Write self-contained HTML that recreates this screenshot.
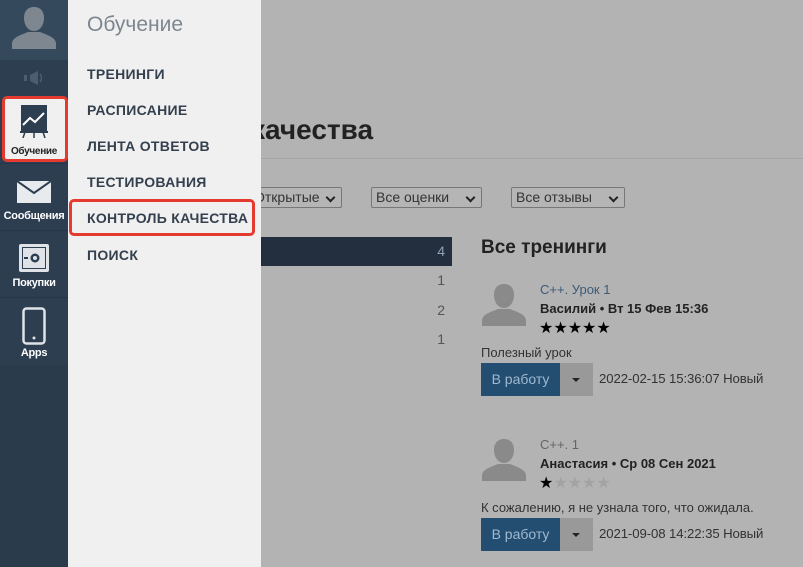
<!DOCTYPE html>
<html><head><meta charset="utf-8"><style>
*{margin:0;padding:0;box-sizing:border-box}
body{width:803px;height:567px;overflow:hidden;position:relative;background:#b3b3b3;font-family:"Liberation Sans",sans-serif;color:#222}
.abs{position:absolute}
#side{left:0;top:0;width:68px;height:567px;background:#2d3e50}
.lbl{position:absolute;width:68px;text-align:center;font-size:11px;font-weight:bold;color:#fff;letter-spacing:-0.3px}
#menu{left:68px;top:0;width:193px;height:567px;background:#f0f0f0;z-index:2}
.mi{position:absolute;left:19px;font-size:14px;font-weight:bold;color:#34404e;letter-spacing:0.3px}
.sel{position:absolute;top:187px;height:21px;border:1px solid #777;border-radius:2px;font-size:14px;color:#333;padding:1px 4px;background:#b5b5b5}
.sel:after{content:"";position:absolute;right:7px;top:6px;width:5px;height:5px;border-right:2px solid #222;border-bottom:2px solid #222;transform:rotate(45deg)}
.num{position:absolute;left:430px;width:15px;text-align:right;font-size:14px;color:#555}
.star{font-size:16px;letter-spacing:0px}
.btn{position:absolute;left:481px;width:79px;height:33px;background:#234e72;color:#9fb9cf;font-size:14px;text-align:center;line-height:33px}
.dd{position:absolute;left:560px;width:33px;height:33px;background:#999}
.dd:after{content:"";position:absolute;left:12px;top:15px;border:4px solid transparent;border-top:4px solid #222}
.meta{position:absolute;left:599px;font-size:13.2px;color:#333;letter-spacing:-0.1px}
</style></head><body>
<div id="side" class="abs">
 <div class="abs" style="left:0;top:0;width:68px;height:60px;background:#35495d"></div>
 <svg class="abs" style="left:11px;top:5px" width="46" height="44" viewBox="0 0 46 44"><path d="M23 2 C16 2 13 7 13 13 C13 20 17 26 23 26 C29 26 33 20 33 13 C33 7 30 2 23 2Z" fill="#7e8790"/><path d="M1 44 L1 38 C2 32 10 30 17 27 L29 27 C36 30 44 32 45 38 L45 44Z" fill="#7e8790"/></svg>
 <svg class="abs" style="left:22px;top:70px" width="24" height="16" viewBox="0 0 24 16"><rect x="2" y="5" width="3" height="6" fill="#4b5e71"/><path d="M8 5 L16 1 L16 15 L8 11Z" fill="#4b5e71"/><path d="M18 4 Q21 8 18 12" stroke="#4b5e71" fill="none" stroke-width="1.5"/></svg>
 <div class="abs" style="left:2px;top:96px;width:66px;height:66px;background:#f0f0f0;border:3px solid #e53a2f;border-radius:5px"></div>
 <svg class="abs" style="left:19px;top:103px" width="30" height="35" viewBox="0 0 30 35"><rect x="2" y="2" width="26" height="26" fill="#2d3e50"/><path d="M4 22 L11 15 L16 19 L25 10" stroke="#fff" stroke-width="2" fill="none"/><path d="M1 29 H29" stroke="#2d3e50" stroke-width="2"/><path d="M6 29 L4 35 M24 29 L26 35 M15 29 V35" stroke="#2d3e50" stroke-width="1.5"/></svg>
 <div class="lbl" style="top:146px;color:#222;font-size:10px;font-weight:bold">Обучение</div>
 <div class="abs" style="left:0;top:163px;width:68px;height:1px;background:#26364a"></div>
 <svg class="abs" style="left:17px;top:181px" width="34" height="22" viewBox="0 0 34 22"><rect width="34" height="22" fill="#e8ebee"/><path d="M0 0 L17 12 L34 0" stroke="#2d3e50" stroke-width="2" fill="none"/></svg>
 <div class="lbl" style="top:210px">Сообщения</div>
 <div class="abs" style="left:0;top:230px;width:68px;height:1px;background:#26364a"></div>
 <svg class="abs" style="left:18px;top:243px" width="32" height="32" viewBox="0 0 32 32"><rect x="1" y="1" width="30" height="28" rx="2" fill="#dfe3e7"/><rect x="4" y="4" width="24" height="22" fill="#2d3e50"/><rect x="5" y="5" width="22" height="20" fill="#dfe3e7"/><circle cx="17" cy="15" r="4.5" fill="#2d3e50"/><circle cx="17" cy="15" r="2" fill="#dfe3e7"/><rect x="6" y="14" width="4" height="2" fill="#2d3e50"/></svg>
 <div class="lbl" style="top:277px">Покупки</div>
 <div class="abs" style="left:0;top:297px;width:68px;height:1px;background:#26364a"></div>
 <svg class="abs" style="left:22px;top:307px" width="24" height="38" viewBox="0 0 24 38"><rect x="1.5" y="1.5" width="21" height="35" rx="3" fill="none" stroke="#dfe3e7" stroke-width="2.5"/><circle cx="12" cy="31" r="1.5" fill="#dfe3e7"/></svg>
 <div class="lbl" style="top:347px">Apps</div>
 <div class="abs" style="left:0;top:365px;width:68px;height:202px;background:#2a3b4c"></div>
</div>
<div id="menu" class="abs">
 <div class="abs" style="left:19px;top:13px;font-size:21px;color:#7d8690">Обучение</div>
 <div class="mi" style="top:66px">ТРЕНИНГИ</div>
 <div class="mi" style="top:102px">РАСПИСАНИЕ</div>
 <div class="mi" style="top:138px">ЛЕНТА ОТВЕТОВ</div>
 <div class="mi" style="top:174px">ТЕСТИРОВАНИЯ</div>
 <div class="abs" style="left:1px;top:199px;width:186px;height:37px;border:3px solid #e53a2f;border-radius:5px"></div>
 <div class="mi" style="top:210px">КОНТРОЛЬ КАЧЕСТВА</div>
 <div class="mi" style="top:247px">ПОИСК</div>
</div>
<div class="abs" style="left:251px;top:114px;font-size:28px;font-weight:bold;color:#222;z-index:1">качества</div>
<div class="abs" style="left:261px;top:158px;width:542px;height:1px;background:#a6a6a6"></div>
<div class="sel" style="left:250px;width:92px;border-left:none">Открытые</div>
<div class="sel" style="left:371px;width:111px">Все оценки</div>
<div class="sel" style="left:511px;width:114px">Все отзывы</div>
<div class="abs" style="left:261px;top:237px;width:191px;height:29px;background:#232f3e"></div>
<div class="num" style="top:243px;color:#8fa0b0">4</div>
<div class="num" style="top:272px">1</div>
<div class="num" style="top:302px">2</div>
<div class="num" style="top:331px">1</div>
<div class="abs" style="left:481px;top:237px;font-size:19px;font-weight:bold">Все тренинги</div>
<svg class="abs" style="left:482px;top:283px" width="44" height="44" viewBox="0 0 44 44"><path d="M22 1 C15 1 12 6 12 12 C12 19 16 25 22 25 C28 25 32 19 32 12 C32 6 29 1 22 1Z" fill="#8a8a8a"/><path d="M0 43 L0 37 C1 31 9 29 16 26 L28 26 C35 29 43 31 44 37 L44 43Z" fill="#8a8a8a"/></svg>
<div class="abs" style="left:540px;top:282px;font-size:13px;color:#3d5a78">C++. Урок 1</div>
<div class="abs" style="left:540px;top:301px;font-size:13px;font-weight:bold">Василий • Вт 15 Фев 15:36</div>
<div class="abs star" style="left:539px;top:318px;color:#000">★★★★★</div>
<div class="abs" style="left:481px;top:345px;font-size:13px;color:#333">Полезный урок</div>
<div class="btn" style="top:363px">В работу</div><div class="dd" style="top:363px"></div>
<div class="meta" style="top:371px">2022-02-15 15:36:07 Новый</div>
<svg class="abs" style="left:482px;top:438px" width="44" height="44" viewBox="0 0 44 44"><path d="M22 1 C15 1 12 6 12 12 C12 19 16 25 22 25 C28 25 32 19 32 12 C32 6 29 1 22 1Z" fill="#8a8a8a"/><path d="M0 43 L0 37 C1 31 9 29 16 26 L28 26 C35 29 43 31 44 37 L44 43Z" fill="#8a8a8a"/></svg>
<div class="abs" style="left:540px;top:437px;font-size:13px;color:#666">C++. 1</div>
<div class="abs" style="left:540px;top:456px;font-size:13px;font-weight:bold">Анастасия • Ср 08 Сен 2021</div>
<div class="abs star" style="left:539px;top:473px;color:#000">★<span style="color:#a3a3a3">★★★★</span></div>
<div class="abs" style="left:481px;top:500px;font-size:13px;color:#333">К сожалению, я не узнала того, что ожидала.</div>
<div class="btn" style="top:518px">В работу</div><div class="dd" style="top:518px"></div>
<div class="meta" style="top:526px">2021-09-08 14:22:35 Новый</div>
</body></html>
